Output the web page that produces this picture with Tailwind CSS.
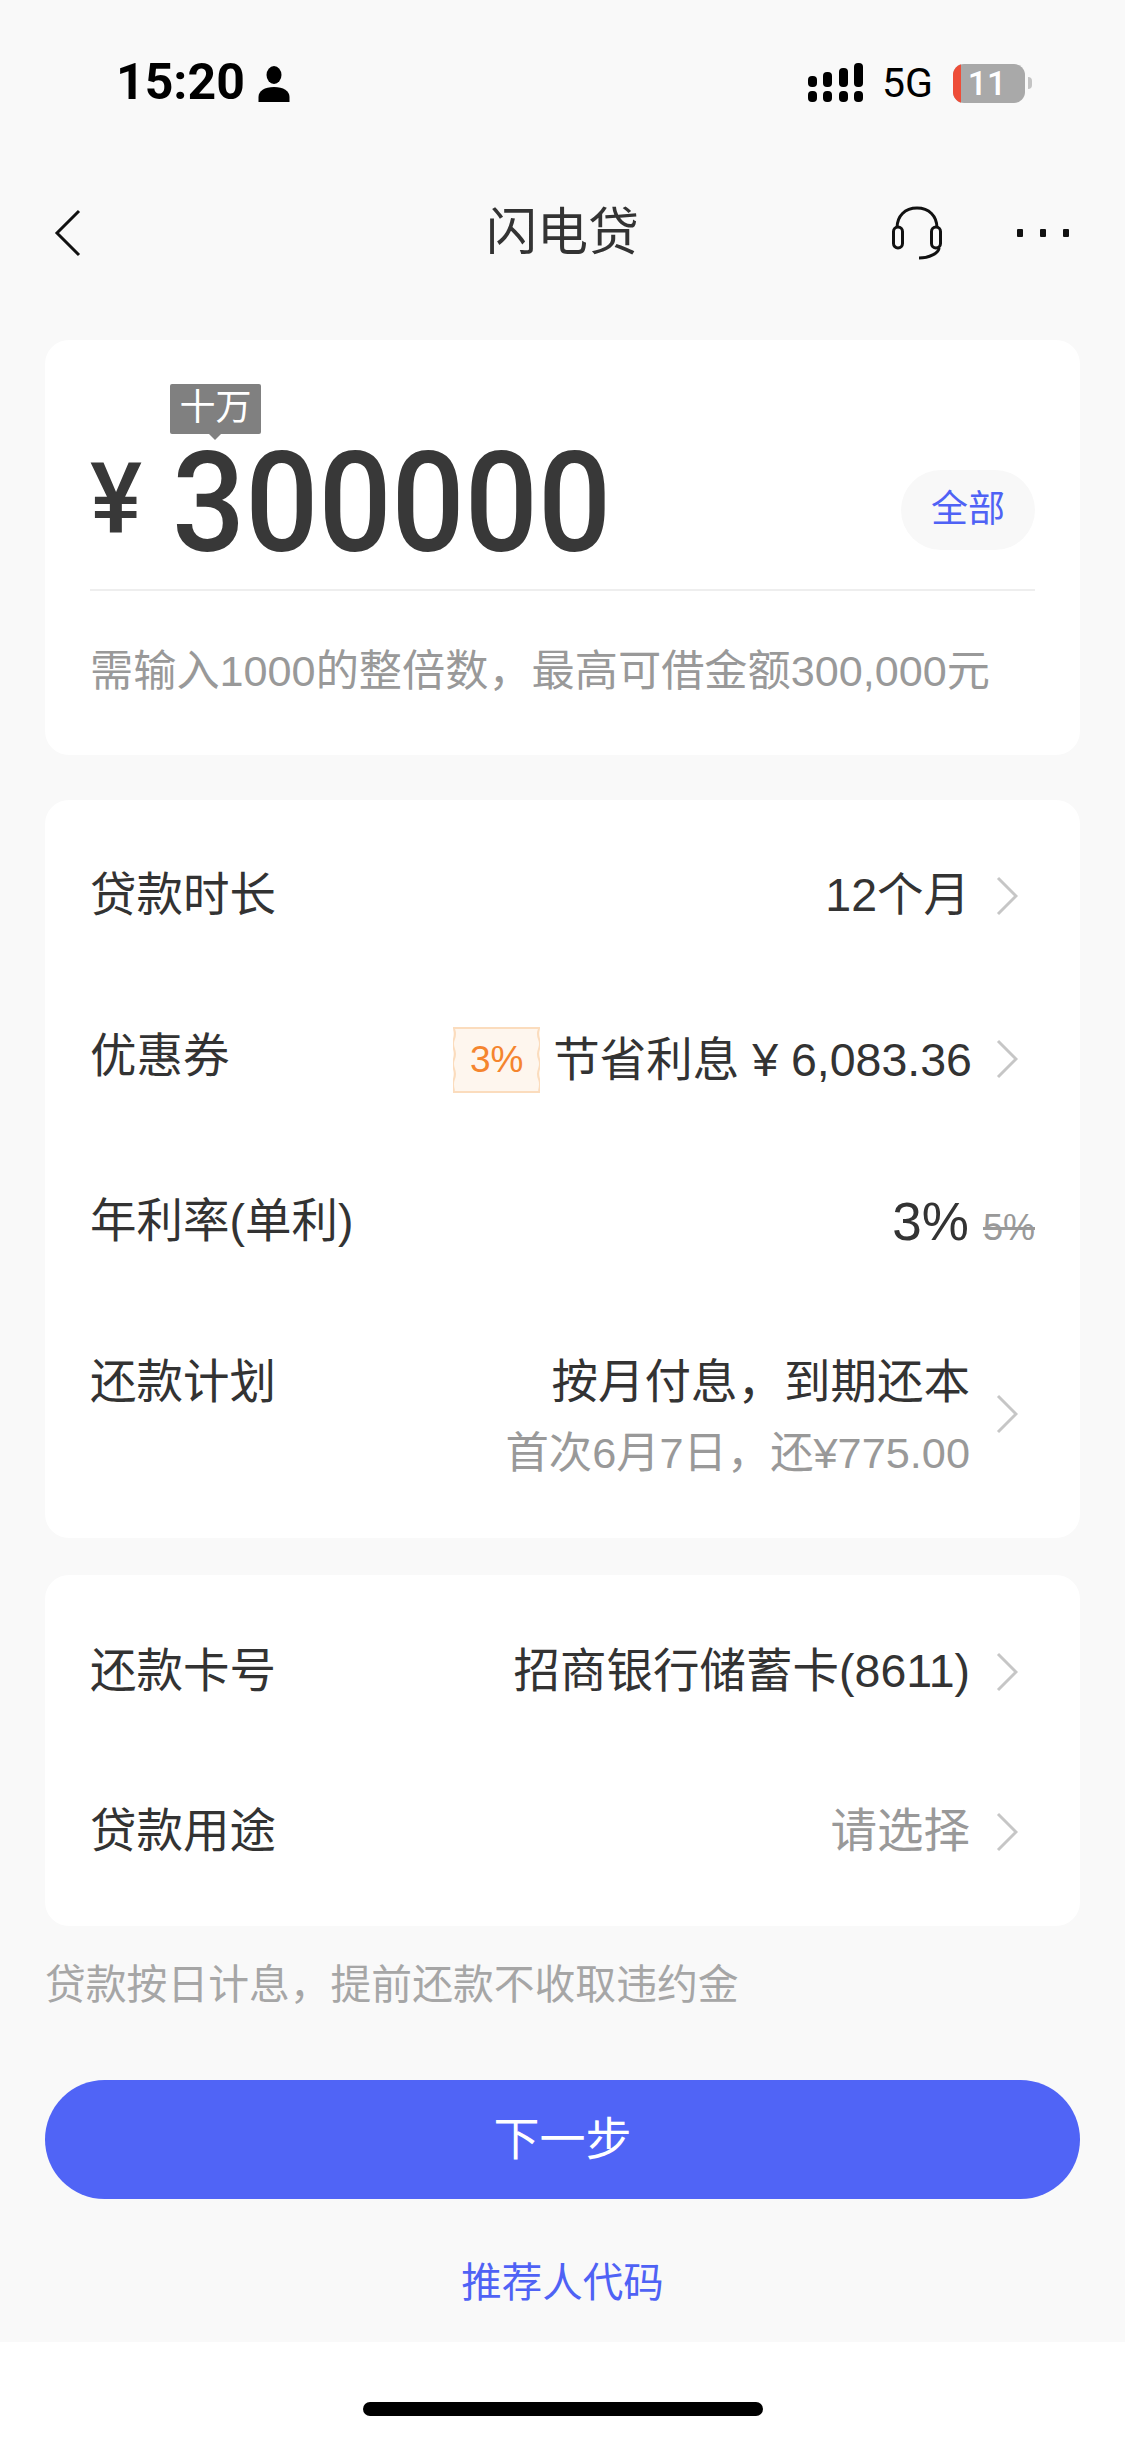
<!DOCTYPE html>
<html lang="zh-CN">
<head>
  <meta charset="UTF-8">
  <meta name="viewport" content="width=device-width, initial-scale=1.0">
  <title>闪电贷</title>
  <script src="https://cdn.jsdelivr.net/npm/@tailwindcss/browser@4"></script>
</head>
<body class="bg-white">
<div class="w-[1125px] h-[2439px] flex flex-col font-['Liberation_Sans','Noto_Sans_CJK_SC',sans-serif] text-[#333]">

  <!-- grey page area -->
  <div class="bg-[#f9f9f9] h-[2342px] flex flex-col">

    <!-- status bar -->
    <div class="h-[168px] pl-[116px] pr-[93px] pt-[55px] flex justify-between items-start text-black">
      <div class="flex items-center gap-[13px] h-[54px]">
        <span class="text-[50px] leading-none font-bold font-['Roboto',sans-serif]">15:20</span>
        <svg class="w-[32px] h-[36px] mt-[4px]" viewBox="0 0 31 36" fill="#000"><ellipse cx="15.5" cy="9" rx="7.5" ry="9"/><path d="M0 36v-5c0-6 6-10 15.5-10S31 25 31 31v5z"/></svg>
      </div>
      <div class="flex items-center h-[54px] mt-[1px]">
        <svg class="w-[55px] h-[40px]" viewBox="0 0 55 40" fill="#000">
          <rect x="0" y="13" width="9" height="11" rx="4"/><rect x="0" y="28" width="9" height="11" rx="4"/>
          <rect x="15" y="9" width="9" height="15" rx="4"/><rect x="15" y="28" width="9" height="11" rx="4"/>
          <rect x="31" y="5" width="9" height="19" rx="4"/><rect x="31" y="28" width="9" height="11" rx="4"/>
          <rect x="46" y="0" width="9" height="24" rx="4"/><rect x="46" y="28" width="9" height="11" rx="4"/>
        </svg>
        <span class="ml-[19px] text-[41px] leading-none font-['Roboto',sans-serif]">5G</span>
        <div class="ml-[20px] w-[72px] h-[39px] rounded-[11px] bg-[#a9a9a9] overflow-hidden flex">
          <div class="w-[8px] bg-[#ee4d38]"></div>
          <span class="flex-1 text-center text-white text-[34px] leading-[39px] font-medium font-['Roboto',sans-serif] pr-[12px]">11</span>
        </div>
        <div class="ml-[3px] w-[4px] h-[12px] rounded-r-full bg-[#c4c4c4]"></div>
      </div>
    </div>

    <!-- nav bar -->
    <div class="h-[128px] relative flex items-center justify-center">
      <svg class="absolute left-[54px] top-[41px] w-[28px] h-[48px]" viewBox="0 0 28 48" fill="none" stroke="#111" stroke-width="3"><path d="M25 2 3 24l22 22"/></svg>
      <span class="text-[51px] leading-none">闪电贷</span>
      <svg class="absolute left-[890px] top-[38px] w-[54px] h-[54px]" viewBox="0 0 54 54" fill="none" stroke="#111" stroke-width="3"><path d="M7 22C7 10 15 2 27 2s20 8 20 20"/><rect x="3.500" y="21" width="9" height="21" rx="4.500"/><rect x="41.500" y="21" width="9" height="21" rx="4.500"/><path d="M49 42c0 5-10 10-20 10"/></svg>
      <div class="absolute left-[1017px] top-[61px] flex gap-[17px]">
        <span class="w-[6px] h-[8px] bg-[#111] rounded-[1px]"></span><span class="w-[6px] h-[8px] bg-[#111] rounded-[1px]"></span><span class="w-[6px] h-[8px] bg-[#111] rounded-[1px]"></span>
      </div>
    </div>

    <div class="px-[45px] pt-[44px] flex flex-col">

      <!-- amount card -->
      <div class="bg-white rounded-[24px] h-[415px] px-[45px] pt-[44px] relative">
        <div class="absolute left-[125px] top-[44px] w-[91px] h-[50px] bg-[#808080] rounded-[2px] text-white text-[36px] leading-[48px] text-center">十万
          <span class="absolute left-[39px] top-[50px] w-0 h-0 border-x-[6px] border-x-transparent border-t-[6px] border-t-[#808080]"></span>
        </div>
        <div class="h-[207px] flex items-end border-b-2 border-[#eeeeee] pb-[32px]">
          <span class="text-[98px] leading-[100px] font-medium text-[#383838] font-['Roboto',sans-serif] mb-[8px]">¥</span>
          <span class="ml-[30px] text-[140px] leading-[108px] font-medium text-[#383838] font-['Roboto',sans-serif] origin-left scale-x-[.92]">300000</span>
          <span class="ml-auto w-[134px] h-[80px] mb-[7px] rounded-full bg-[#f8f8f8] text-[#4f62f5] text-[37px] leading-[80px] text-center">全部</span>
        </div>
        <p class="mt-[50px] text-[43.2px] leading-[60px] text-[#999] whitespace-nowrap">需输入1000的整倍数，最高可借金额300,000元</p>
      </div>

      <!-- loan terms card -->
      <div class="bg-white rounded-[24px] mt-[45px] h-[738px] pl-[45px] pr-[62px] pt-[14px] flex flex-col">
        <div class="h-[163px] flex items-center justify-between text-[46.500px]">
          <span>贷款时长</span>
          <div class="flex items-center gap-[26px]">
            <span>12个月</span>
            <svg class="w-[22px] h-[40px]" viewBox="0 0 22 40" fill="none" stroke="#c6c6c6" stroke-width="3"><path d="M2 2l18 18L2 38"/></svg>
          </div>
        </div>
        <div class="h-[163px] flex items-center justify-between text-[46.500px]">
          <span class="mb-[4px]">优惠券</span>
          <div class="flex items-center">
            <div class="relative w-[87px] h-[66px] mt-[3px] bg-[#fef6ee] border-y-2 border-[#fbdcbd] text-[#f5852e] text-[37px] leading-[62px] text-center">3%
              <svg class="absolute left-0 top-0 w-full h-full" viewBox="0 0 87 62" fill="none" stroke="#fbdcbd" stroke-width="2"><path d="M1 0q2 5 0 10t0 10 0 10 0 10 0 10 0 12M86 0q-2 5 0 10t0 10 0 10 0 10 0 10 0 12"/></svg>
            </div>
            <span class="ml-[13px] mt-[4px]">节省利息 ¥ 6,083.36</span>
            <svg class="ml-[24px] w-[22px] h-[40px]" viewBox="0 0 22 40" fill="none" stroke="#c6c6c6" stroke-width="3"><path d="M2 2l18 18L2 38"/></svg>
          </div>
        </div>
        <div class="h-[163px] flex items-center justify-between text-[46.500px] mr-[-17px]">
          <span>年利率(单利)</span>
          <div class="flex items-baseline gap-[14px]">
            <span class="text-[53px]">3%</span>
            <span class="text-[36px] text-[#999] line-through">5%</span>
          </div>
        </div>
        <div class="flex justify-between text-[46.500px] pt-[47px]">
          <span class="leading-[64px]">还款计划</span>
          <div class="flex items-center gap-[26px]">
            <div class="text-right">
              <p class="leading-[64px]">按月付息，到期还本</p>
              <p class="text-[43.300px] leading-[58px] text-[#999] mt-[10px]">首次6月7日，还¥775.00</p>
            </div>
            <svg class="w-[22px] h-[40px] mb-[4px]" viewBox="0 0 22 40" fill="none" stroke="#c6c6c6" stroke-width="3"><path d="M2 2l18 18L2 38"/></svg>
          </div>
        </div>
      </div>

      <!-- repayment card -->
      <div class="bg-white rounded-[24px] mt-[37px] h-[351px] pl-[45px] pr-[62px] pt-[17px] flex flex-col">
        <div class="h-[160px] flex items-center justify-between text-[46.500px]">
          <span>还款卡号</span>
          <div class="flex items-center gap-[26px]">
            <span>招商银行储蓄卡(8611)</span>
            <svg class="w-[22px] h-[40px]" viewBox="0 0 22 40" fill="none" stroke="#c6c6c6" stroke-width="3"><path d="M2 2l18 18L2 38"/></svg>
          </div>
        </div>
        <div class="h-[160px] flex items-center justify-between text-[46.500px]">
          <span>贷款用途</span>
          <div class="flex items-center gap-[26px]">
            <span class="text-[#999]">请选择</span>
            <svg class="w-[22px] h-[40px]" viewBox="0 0 22 40" fill="none" stroke="#c6c6c6" stroke-width="3"><path d="M2 2l18 18L2 38"/></svg>
          </div>
        </div>
      </div>

      <p class="mt-[35px] text-[40.800px] leading-[48px] text-[#a6a6a6]">贷款按日计息，提前还款不收取违约金</p>

      <div class="mt-[71px] h-[119px] rounded-full bg-[#5064f6] text-white text-[46px] leading-[119px] text-center">下一步</div>

      <p class="mt-[57px] text-[#4f62f5] text-[40.500px] leading-[54px] text-center">推荐人代码</p>
    </div>
  </div>

  <!-- home indicator -->
  <div class="flex-1 flex justify-center pt-[60px]">
    <div class="w-[400px] h-[14px] rounded-[7px] bg-black"></div>
  </div>
</div>
</body>
</html>
